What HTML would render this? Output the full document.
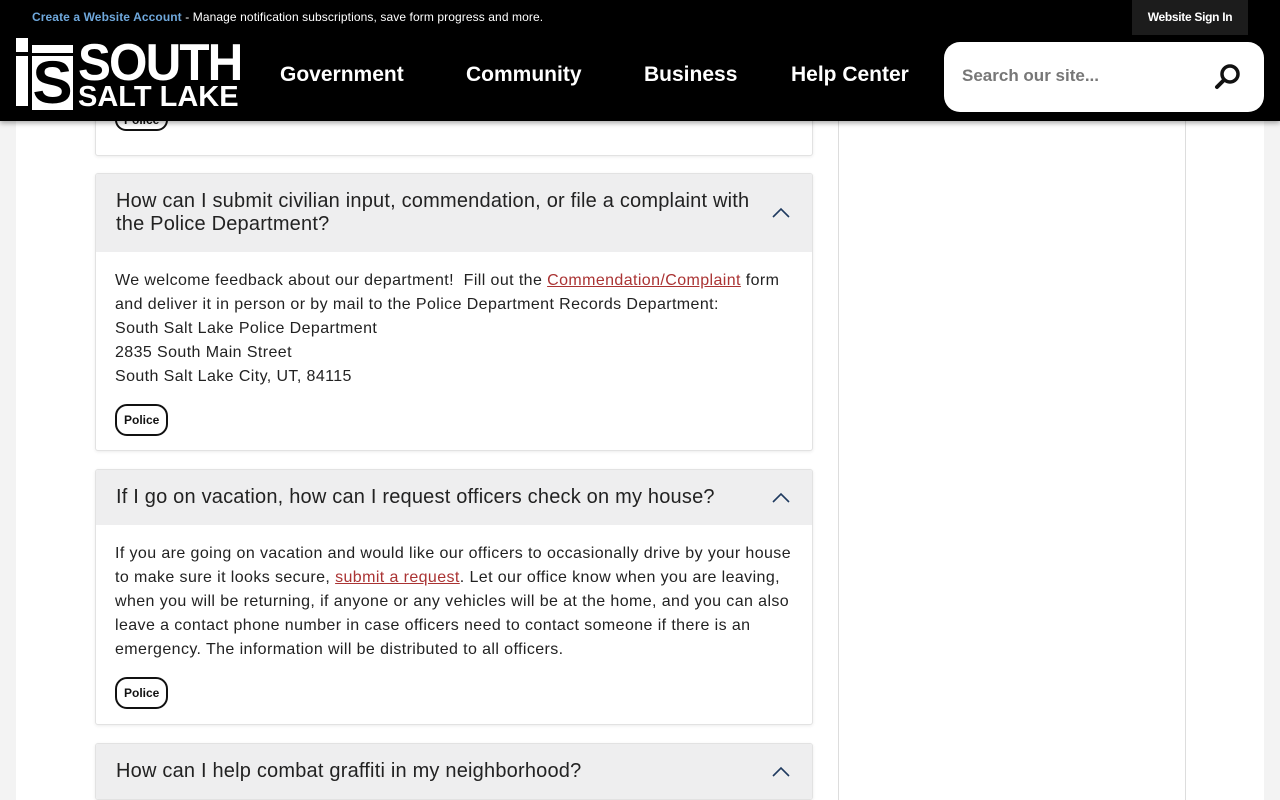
<!DOCTYPE html>
<html><head><meta charset="utf-8"><style>
*{margin:0;padding:0;box-sizing:border-box}
html,body{width:1280px;height:800px;overflow:hidden}
body{background:#f3f3f3;font-family:"Liberation Sans",sans-serif;position:relative}
.page{position:absolute;left:16px;top:0;width:1248px;height:800px;background:#fff}
.vline{position:absolute;top:120px;height:680px;width:1px;background:#ddd}
.header{position:absolute;left:0;top:0;width:1280px;height:121px;background:#000;box-shadow:0 2px 5px rgba(0,0,0,.35);z-index:5}
.top{position:absolute;left:32px;top:10px;font-size:12px;color:#fff;letter-spacing:0.1px}
.top b{color:#6fa8dc}
.signin{position:absolute;left:1132px;top:0;width:116px;height:35px;background:#1c1c1c;color:#fff;font-size:12px;text-align:center;line-height:35px;font-weight:bold;letter-spacing:-0.3px}
.nav{position:absolute;top:63px;color:#fff;font-weight:bold;font-size:21px}
.search{position:absolute;left:944px;top:42px;width:320px;height:70px;background:#fff;border-radius:16px}
.search span{position:absolute;left:18px;top:24px;font-size:17px;font-weight:bold;color:#777}
.card{position:absolute;left:95px;width:718px;background:#fff;border:1px solid #e2e2e2;border-radius:3px;box-shadow:0 1px 3px rgba(0,0,0,.08);overflow:hidden}
.q{background:#eeeeef;padding:0 60px 0 20px;font-size:20px;letter-spacing:0.2px;color:#222;line-height:23px;position:relative;display:flex;align-items:center}
.q svg{position:absolute;right:22px;top:50%;margin-top:-6px}
.a{padding:17px 20px 0 19px;font-size:16px;line-height:24px;color:#222;letter-spacing:0.4px}
.a a{color:#a33;text-decoration:underline}
.tag{display:inline-block;border:2px solid #111;border-radius:12px;font-size:12px;font-weight:bold;padding:2px 7px;margin-top:15px;color:#111;letter-spacing:0}
</style></head><body>
<div class="page"></div>
<div class="vline" style="left:838px"></div>
<div class="vline" style="left:1185px"></div>

<div class="card" style="top:60px;height:96px"><div style="position:absolute;left:19px;top:48px;margin:0" class="tag">Police</div></div>

<div class="card" style="top:173px;height:278px">
<div class="q" style="height:78px">How can I submit civilian input, commendation, or file a complaint with the Police Department?<svg width="18" height="11" viewBox="0 0 18 11"><path d="M1 10L9 2L17 10" fill="none" stroke="#1f3a5f" stroke-width="1.6"/></svg></div>
<div class="a">We welcome feedback about our department!&nbsp; Fill out the <a>Commendation/Complaint</a> form and deliver it in person or by mail to the Police Department Records Department:<br>South Salt Lake Police Department<br>2835 South Main Street<br>South Salt Lake City, UT, 84115<br><span class="tag">Police</span></div>
</div>

<div class="card" style="top:469px;height:256px">
<div class="q" style="height:55px">If I go on vacation, how can I request officers check on my house?<svg width="18" height="11" viewBox="0 0 18 11"><path d="M1 10L9 2L17 10" fill="none" stroke="#1f3a5f" stroke-width="1.6"/></svg></div>
<div class="a">If you are going on vacation and would like our officers to occasionally drive by your house to make sure it looks secure, <a>submit a request</a>. Let our office know when you are leaving, when you will be returning, if anyone or any vehicles will be at the home, and you can also leave a contact phone number in case officers need to contact someone if there is an emergency. The information will be distributed to all officers.<br><span class="tag">Police</span></div>
</div>

<div class="card" style="top:743px;height:57px">
<div class="q" style="height:55px">How can I help combat graffiti in my neighborhood?<svg width="18" height="11" viewBox="0 0 18 11"><path d="M1 10L9 2L17 10" fill="none" stroke="#1f3a5f" stroke-width="1.6"/></svg></div>
</div>

<div class="header">
<div class="top"><b>Create a Website Account</b> - Manage notification subscriptions, save form progress and more.</div>
<div class="signin">Website Sign In</div>
<div style="position:absolute;left:16px;top:38px;width:57px;height:72px">
<div style="position:absolute;left:0;top:0;width:12px;height:14px;background:#fff"></div>
<div style="position:absolute;left:16px;top:7px;width:41px;height:8px;background:#fff"></div>
<div style="position:absolute;left:0;top:18px;width:12px;height:50px;background:#fff"></div>
<div style="position:absolute;left:16px;top:18px;width:41px;height:54px;background:#fff;color:#000;font-weight:bold;font-size:60px;line-height:54px;text-align:center;overflow:hidden">S</div>
</div>
<div style="position:absolute;left:78px;top:38px;color:#fff;font-weight:bold;font-size:52px;line-height:50px;letter-spacing:-2px;transform:scaleX(0.95);transform-origin:left">SOUTH</div>
<div style="position:absolute;left:78px;top:83px;color:#fff;font-weight:bold;font-size:29px;line-height:28px">SALT LAKE</div>
<div class="nav" style="left:280px">Government</div>
<div class="nav" style="left:466px">Community</div>
<div class="nav" style="left:644px">Business</div>
<div class="nav" style="left:791px">Help Center</div>
<div class="search"><span>Search our site...</span>
<svg style="position:absolute;left:270px;top:21px" width="28" height="28" viewBox="0 0 28 28"><circle cx="16" cy="11" r="8" fill="none" stroke="#111" stroke-width="3.5"/><path d="M10 17L3 24" stroke="#111" stroke-width="4" stroke-linecap="round"/></svg></div>
</div>
</body></html>
